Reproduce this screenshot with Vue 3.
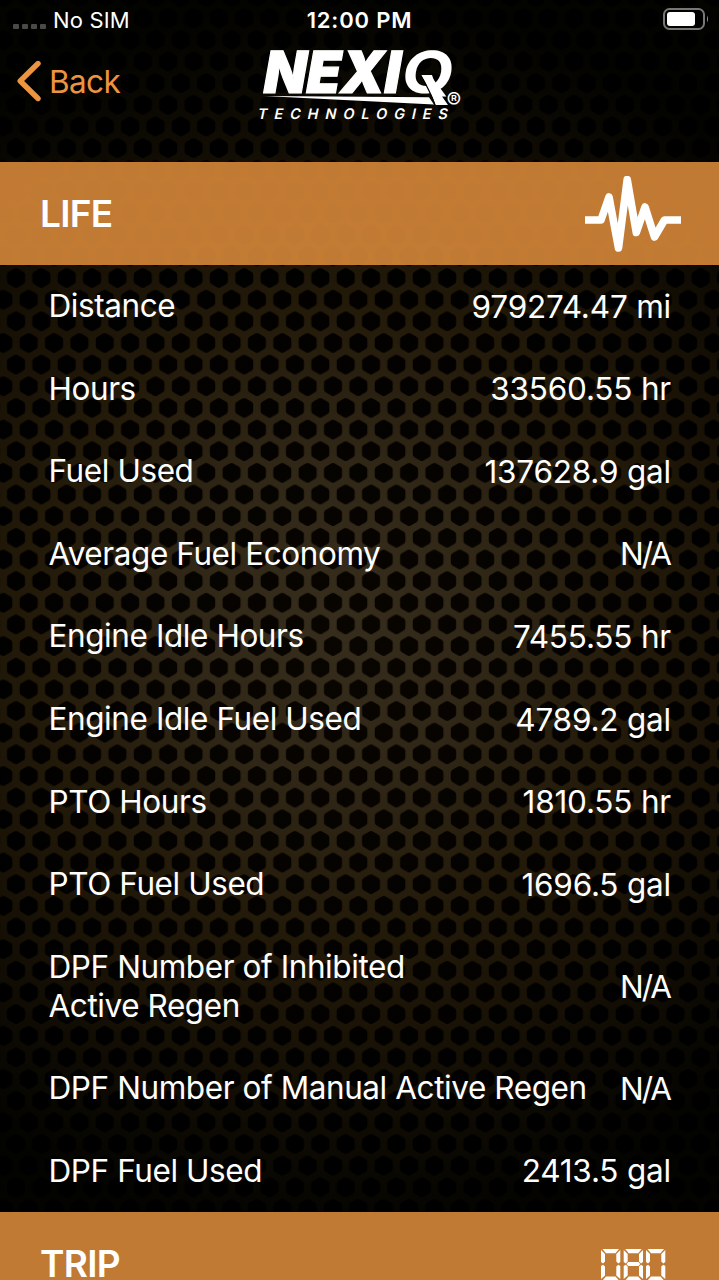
<script setup>
const rows = [
  { label: ['Distance'], value: '979274.47 mi' },
  { label: ['Hours'], value: '33560.55 hr' },
  { label: ['Fuel Used'], value: '137628.9 gal' },
  { label: ['Average Fuel Economy'], value: 'N/A' },
  { label: ['Engine Idle Hours'], value: '7455.55 hr' },
  { label: ['Engine Idle Fuel Used'], value: '4789.2 gal' },
  { label: ['PTO Hours'], value: '1810.55 hr' },
  { label: ['PTO Fuel Used'], value: '1696.5 gal' },
  { label: ['DPF Number of Inhibited', 'Active Regen'], value: 'N/A' },
  { label: ['DPF Number of Manual Active Regen'], value: 'N/A' },
  { label: ['DPF Fuel Used'], value: '2413.5 gal' },
]
const digits = [0, 22.7, 45]
</script>

<template>
  <main class="screen">
    <svg class="mesh" width="719" height="1280" viewBox="0 0 719 1280" aria-hidden="true">
      <defs>
        <radialGradient id="glow" gradientUnits="userSpaceOnUse" cx="0" cy="0" r="1" gradientTransform="translate(335 620) scale(600 620)">
          <stop offset="0" stop-color="#372d1d" />
          <stop offset="0.25" stop-color="#302717" />
          <stop offset="0.5" stop-color="#231a09" />
          <stop offset="0.7" stop-color="#181105" />
          <stop offset="0.85" stop-color="#0d0a03" />
          <stop offset="1" stop-color="#030300" />
        </radialGradient>
        <radialGradient id="hole" gradientUnits="userSpaceOnUse" cx="0" cy="0" r="1" gradientTransform="translate(345 660) scale(420 480)">
          <stop offset="0" stop-color="#090500" />
          <stop offset="1" stop-color="#000000" />
        </radialGradient>
        <pattern id="hex" width="25.36" height="43.3" patternUnits="userSpaceOnUse" patternTransform="translate(269.6 591.9)">
          <rect width="25.36" height="43.3" fill="#000" />
          <g fill="#fff" stroke="#fff" stroke-width="7" stroke-linejoin="round">
            <path d="M12.68 4.500 18.180 7.700V13.950L12.680 17.150 7.180 13.950V7.700Z" />
            <path d="M0 26.150 5.500 29.350V35.600L0 38.800 -5.500 35.600V29.350Z" />
            <path d="M25.360 26.150 30.860 29.350V35.600L25.360 38.800 19.860 35.600V29.350Z" />
          </g>
        </pattern>
        <mask id="holes"><rect width="719" height="1280" fill="url(#hex)" /></mask>
      </defs>
      <rect width="719" height="1280" fill="url(#glow)" />
      <rect width="719" height="1280" fill="url(#hole)" mask="url(#holes)" />
    </svg>

    <header class="top">
      <div class="status">
        <div class="carrier">
          <span class="dots"><i /><i /><i /><i /></span>
          <span class="sim">No SIM</span>
        </div>
        <span class="clock">12:00 PM</span>
        <svg class="battery" width="48" height="24" viewBox="0 0 48 24">
          <rect x="2" y="2" width="40" height="20" rx="5.5" fill="none" stroke="#777" stroke-width="2" />
          <rect x="5" y="5" width="28" height="14" rx="3" fill="#fff" />
          <path d="M45 8.5Q47.2 12 45 15.5Z" fill="#888" />
        </svg>
      </div>
      <div class="nav">
        <div class="back">
          <svg width="26" height="42" viewBox="0 0 26 42">
            <path d="M23 3.500 5.200 21 23 38.500" fill="none" stroke="#ed9440" stroke-width="5.400" stroke-linecap="round" stroke-linejoin="round" />
          </svg>
          <span>Back</span>
        </div>
        <svg class="logo" width="210" height="110" viewBox="255 30 210 110">
          <g fill="#fff" font-family="Inter, sans-serif" font-weight="900">
            <g transform="translate(262 92.5) skewX(-10)">
              <text x="-1" y="0" font-size="58" textLength="137" lengthAdjust="spacingAndGlyphs" stroke="#fff" stroke-width="1.2">NEXI</text>
            </g>
            <g transform="translate(400 92.500) skewX(-10)">
              <text x="-1" y="0" font-size="58" font-weight="700" textLength="52" lengthAdjust="spacingAndGlyphs">Q</text>
            </g>
            <path d="M264 96 429 97.300 434 104.500Z" />
            <path d="M421 75H432Q436 89 448 105H435.500Q431 92 421 75Z" />
            <path d="M420.600 75Q430 91 435 105" fill="none" stroke="#000" stroke-width="1.300" />
            <g transform="translate(258 119) skewX(-12)">
              <text x="-1" y="0" font-size="14.500" font-weight="600" textLength="190">TECHNOLOGIES</text>
            </g>
            <text x="446.500" y="108" font-size="22" font-weight="400">®</text>
          </g>
        </svg>
      </div>
    </header>

    <section class="bar life">
      <h2>LIFE</h2>
      <svg class="pulse" width="98" height="80" viewBox="0 0 98 80">
        <path d="M1 44H17L25 21 34.5 72 43.2 3.500 52.300 56.500 61 31 70.500 61 80.500 44H97" fill="none" stroke="#fff" stroke-width="7.600" stroke-linejoin="round" />
      </svg>
    </section>

    <ul class="list">
      <li v-for="row in rows" :key="row.label[0]" :class="{ tall: row.label.length > 1 }">
        <span class="label"><span v-for="line in row.label" :key="line">{{ line }}</span></span>
        <span class="value" :class="{ empty: row.value === 'N/A' }">{{ row.value }}</span>
      </li>
    </ul>

    <section class="bar trip">
      <h2>TRIP</h2>
      <svg class="odometer" width="66" height="36" viewBox="0 0 66 36">
        <g v-for="(x, i) in digits" :key="x" :transform="`translate(${x} 0)`" fill="#fff">
          <path d="M1.500 0H18L14.500 4.200H5Z" />
          <path d="M0 1 4 5V12.500L2 14.500 0 13Z" />
          <path d="M19.300 1 15.300 5V12.500L17.300 14.500 19.300 13Z" />
          <path v-if="i === 1" d="M4.500 13H14.800L16.600 15 14.800 17H4.500L2.700 15Z" />
          <path d="M0 17 2 15.700 4 17.500V26.500L0 30Z" />
          <path d="M19.300 17 17.300 15.700 15.300 17.500V26.500L19.300 30Z" />
          <path d="M5 27.500H14.500L18 31.500H1.500Z" />
        </g>
      </svg>
    </section>
  </main>
</template>

<style>
html, body { margin: 0; background: #000; }
body { overflow: hidden; }
</style>

<style scoped>
.screen {
  position: relative;
  width: 719px;
  height: 1280px;
  overflow: hidden;
  background: #000;
  color: #fff;
  font-family: Inter, "Liberation Sans", sans-serif;
}
.mesh { position: absolute; inset: 0; }
.top, .bar, .list { position: relative; }
.top { height: 162px; }
.status {
  display: grid;
  grid-template-columns: 1fr auto 1fr;
  align-items: center;
  height: 40px;
  font-size: 21.5px;
}
.carrier { display: flex; align-items: center; gap: 7px; padding-left: 13px; }
.dots { display: flex; gap: 3px; padding-top: 12px; }
.dots i { width: 6px; height: 5px; border-radius: 1px; background: #4a4a4a; }
.sim { font-size: 22px; letter-spacing: 0.15px; }
.clock { font-size: 22px; font-weight: 600; letter-spacing: 0.8px; }
.battery { justify-self: end; margin-right: 9px; margin-top: -2px; }
.nav { display: flex; align-items: flex-start; height: 85px; }
.back {
  display: flex;
  align-items: center;
  gap: 8px;
  width: 240px;
  margin-left: 15px;
  height: 82px;
  color: #ed9440;
  font-size: 31.5px;
  letter-spacing: -0.6px;
}
.logo { display: block; margin-top: -10px; }
.bar {
  display: flex;
  align-items: center;
  justify-content: space-between;
  box-sizing: border-box;
  height: 103px;
  padding: 0 37px 0 40px;
  background: rgba(214, 135, 56, 0.9);
}
h2 { margin: 0; font-size: 37px; font-weight: 600; letter-spacing: -0.7px; line-height: 1; }
.pulse { margin-top: 4px; }
.trip .odometer { margin: 8px 15px 0 0; }
.list { margin: 0; padding: 0; list-style: none; }
li {
  display: flex;
  align-items: center;
  justify-content: space-between;
  height: 82.55px;
  padding: 0 48px 0 48.5px;
  font-size: 31.5px;
  line-height: 39px;
  letter-spacing: -0.42px;
  white-space: nowrap;
}
li.tall { height: 121.5px; }
.label { display: flex; flex-direction: column; margin-top: -1px; }
.value { letter-spacing: -0.2px; }
.value.empty { margin-right: 1px; letter-spacing: -2px; }
</style>
